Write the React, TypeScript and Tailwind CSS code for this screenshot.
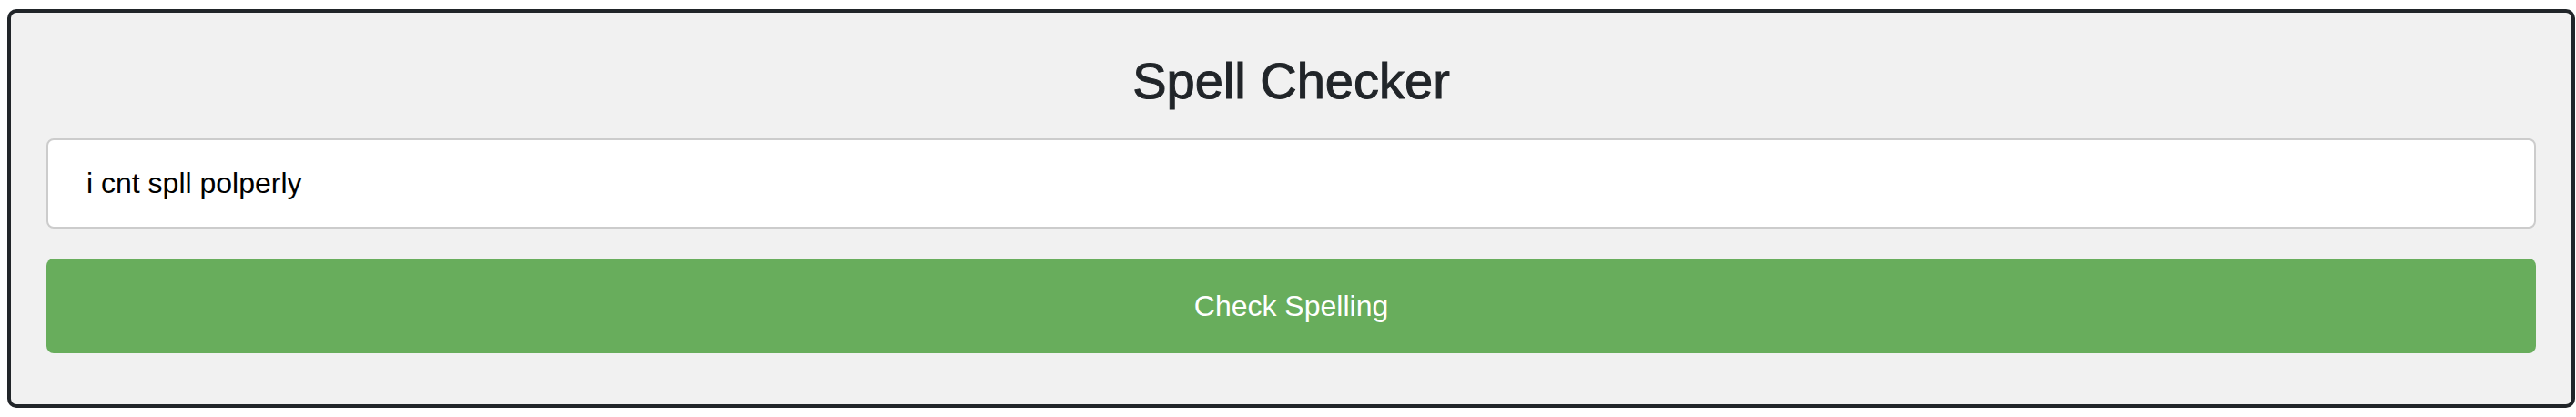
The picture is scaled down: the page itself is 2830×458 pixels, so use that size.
import React, { useState } from 'react';

const App: React.FC = () => {
  const [text, setText] = useState('i cnt spll polperly');

  return (
    <div className="w-[2830px] h-[458px] bg-white pt-[10px] pl-[8px] font-['Liberation_Sans',Arial,sans-serif]">
      <div className="w-[2821px] h-[438px] border-[4px] border-[#212529] rounded-[10px] bg-[#f1f1f1] px-[39px] pt-[41px]">
        <h2 className="text-center text-[56px] leading-[67px] font-normal text-[#212529] [-webkit-text-stroke:1px_#212529]">
          Spell Checker
        </h2>
        <input
          type="text"
          value={text}
          onChange={(e) => setText(e.target.value)}
          className="mt-[30px] block w-full h-[99px] bg-white border-2 border-[#cccccc] rounded-[8px] pl-[42px] pr-[39px] text-[32px] text-black outline-none"
        />
        <button
          type="button"
          className="mt-[33px] block w-full h-[104px] bg-[#68ad5c] rounded-[8px] text-[32px] text-white"
        >
          Check Spelling
        </button>
      </div>
    </div>
  );
};

export default App;
